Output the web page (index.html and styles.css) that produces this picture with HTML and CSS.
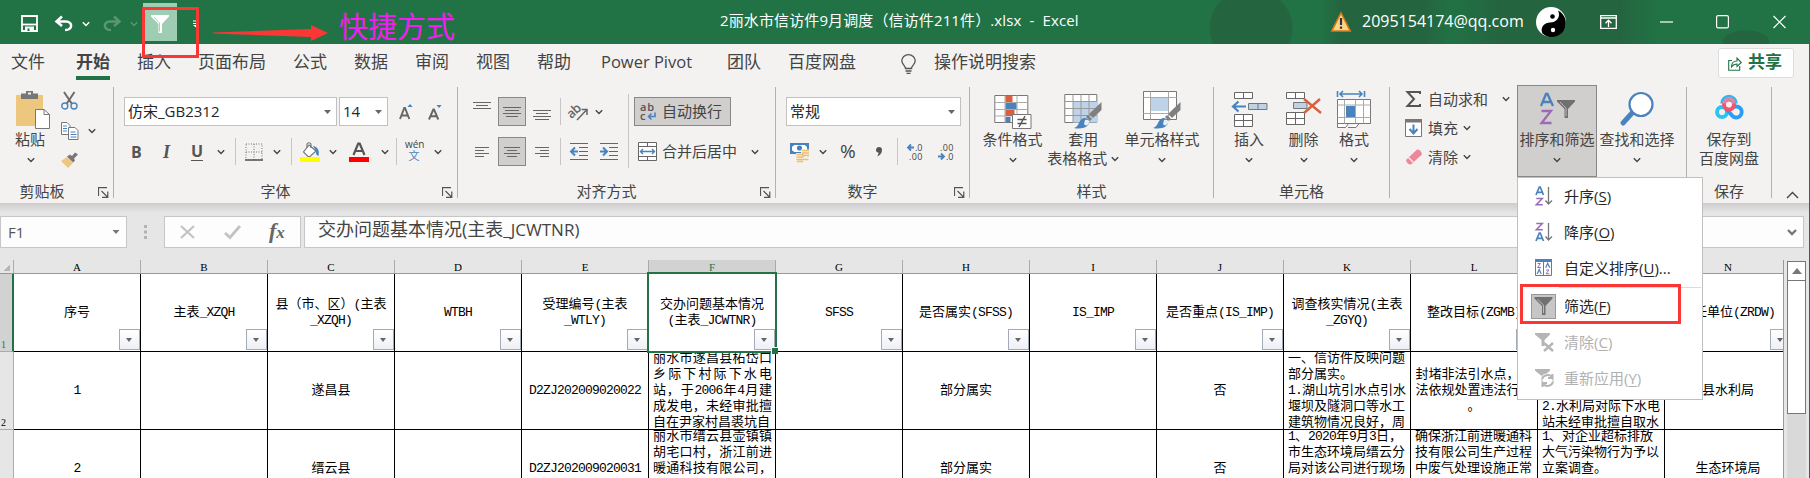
FILE: index.html
```html
<!DOCTYPE html>
<html lang="zh-CN">
<head>
<meta charset="utf-8">
<title>Excel</title>
<link rel="stylesheet" href="styles.css">
</head>
<body>
<svg class="defs" width="0" height="0">
  <symbol id="chev" viewBox="0 0 8 6"><path d="M.8 1.2 4 4.4 7.2 1.2" fill="none" stroke="currentColor" stroke-width="1.4"/></symbol>
  <symbol id="tri" viewBox="0 0 7 4"><path d="M0 0h7L3.5 4z" fill="currentColor"/></symbol>
  <symbol id="launch" viewBox="0 0 11 11"><path d="M.5 9V.7H9M3.5 4l5.5 5.500M9.800 4.500v5.800H4" fill="none" stroke="#555" stroke-width="1.200"/></symbol>
  <symbol id="funnel" viewBox="0 0 18 18"><path d="M0 0h18v1.500L11 9v9H7.500V9L0 1.500z" fill="currentColor"/><path d="M3 2l6 6.200v8" fill="none" stroke="#fff" stroke-opacity=".6" stroke-width=".9"/></symbol>
  <symbol id="brush" viewBox="0 0 28 28"><path d="M27.500 1v8L19 17l-4-4z" fill="#808080"/><path d="M14 14l4 4-2 2-4-4z" fill="#808080"/><path d="M0 27c5-1 5-9 10-10 4-.5 7 4 4 7-3 4-10 4-14 3z" fill="#4a82bd"/><path d="M11 19c3-1 5 1 4 3-1 3-4 3-5 1z" fill="#e6eff8"/></symbol>
</svg>

<div class="window">
<header class="titlebar">
  <div class="qat">
    <svg width="17" height="17" viewBox="0 0 17 17"><path d="M1 1h15v15H1z" fill="none" stroke="#fff" stroke-width="1.800"/><path d="M1 9.500h15" stroke="#fff" stroke-width="1.800"/><path d="M4 11.500h9V16H4z" fill="#fff"/><path d="M6.500 13.500h2V16h-2z" fill="#217346"/></svg>
    <svg width="18" height="15" viewBox="0 0 18 15"><path d="M7 .5 1.500 5.500 7 10M2 5.500h9c7 0 7 8.500-1 8.500" fill="none" stroke="#fff" stroke-width="2.500"/></svg>
    <svg class="w" width="8" height="6"><use href="#chev"/></svg>
    <svg class="dim" width="18" height="15" viewBox="0 0 18 15"><path d="M11 .5 16.500 5.500 11 10M16 5.500H7c-7 0-7 8.500 1 8.500" fill="none" stroke="#fff" stroke-width="2.500"/></svg>
    <svg class="w dim" width="8" height="6"><use href="#chev"/></svg>
    <span class="qat-filter"><svg width="18" height="18" viewBox="0 0 18 18"><path d="M0 0h18v1.500L11 9v9H7.500V9L0 1.500z" fill="#fff"/><path d="M3 2l5.500 6v8.500" fill="none" stroke="#9fcdb3" stroke-width=".9"/></svg></span>
    <svg width="5" height="8" viewBox="0 0 5 8"><path d="M0 1h5M0 3.500h5" stroke="#fff" stroke-width="1"/><path d="M0 5h5L3 7.500z" fill="#fff"/></svg>
  </div>
  <div class="doc-title">2丽水市信访件9月调度（信访件211件）.xlsx&nbsp; -&nbsp; Excel</div>
  <div class="account">
    <svg width="20" height="20" viewBox="0 0 20 20"><path d="M10 1 19.200 19H.8z" fill="#fbd58a" stroke="#d87a16" stroke-width="1.600"/><path d="M10 6v7M10 14.500v2.300" stroke="#333" stroke-width="2.200"/></svg>
    <span class="mail">2095154174@qq.com</span>
    <svg width="30" height="30" viewBox="0 0 30 30"><circle cx="15" cy="15" r="15" fill="#fff"/><path d="M22 3.500A14 14 0 1 1 6.500 26.500C3.500 20 9 15.500 14 15.500c7 0 11-6 8-12z" fill="#000"/><circle cx="16.500" cy="9.500" r="2.300"/><circle cx="17" cy="23" r="2.200" fill="#fff"/></svg>
  </div>
  <div class="winbtns">
    <svg width="17" height="14" viewBox="0 0 17 14"><path d="M.7.7h15.600v12.600H.7zM.7 3h15.600M8.500 12V5.500M5.500 8.200l3-3 3 3" fill="none" stroke="#fff" stroke-width="1.300"/></svg>
    <svg width="13" height="14" viewBox="0 0 13 14"><path d="M0 7h13" stroke="#fff" stroke-width="1.200"/></svg>
    <svg width="13" height="14" viewBox="0 0 13 14"><rect x=".6" y=".6" width="11.800" height="12.300" rx="1.500" fill="none" stroke="#fff" stroke-width="1.200"/></svg>
    <svg width="13" height="14" viewBox="0 0 13 14"><path d="M.5 1l12 12M12.500 1l-12 12" stroke="#fff" stroke-width="1.200"/></svg>
  </div>
</header>

<nav class="tabs">
  <span>文件</span><span class="active">开始</span><span>插入</span><span>页面布局</span><span>公式</span><span>数据</span><span>审阅</span><span>视图</span><span>帮助</span><span class="pp">Power Pivot</span><span>团队</span><span>百度网盘</span>
  <svg class="bulb" width="15" height="20" viewBox="0 0 15 20"><path d="M4.500 14.500c0-3-3.700-4-3.700-7.700a6.700 6.200 0 0 1 13.400 0c0 3.700-3.700 4.700-3.700 7.700zM4.500 17h6M5.500 19.300h4" fill="none" stroke="#555" stroke-width="1.300"/></svg>
  <span class="tell">操作说明搜索</span>
  <div class="share"><svg width="14" height="15" viewBox="0 0 14 15"><path d="M4 4.500H.7v9.800h11V10M3.500 11c0-4 2-6 5.500-6V2l4.300 4.500L9 10.500V8c-2.500 0-4 .8-5.500 3z" fill="none" stroke="#217346" stroke-width="1.100"/></svg><b>共享</b></div>
</nav>

<section class="ribbon">
  <div class="group clip">
    <div class="body">
      <div class="big paste">
        <svg width="36" height="38" viewBox="0 0 36 38"><path d="M1 4h27v31H1z" fill="#edc77e"/><path d="M6 2.500h5V0h7v2.500h5V8H6z" fill="#777"/><path d="M13 1.500h3v2h-3z" fill="#f3f2f1"/><path d="M20.500 18.500h8.500l5.500 5v14h-14z" fill="#fff" stroke="#777"/><path d="M29 18.500v5h5.500" fill="none" stroke="#777"/></svg>
        <span>粘贴</span><svg class="c" width="8" height="6"><use href="#chev"/></svg>
      </div>
      <div class="cliptools">
        <svg width="17" height="18" viewBox="0 0 17 18"><path d="M3 0l8 12M13.500 0l-8 12" stroke="#6b6b6b" stroke-width="2"/><circle cx="3.800" cy="14" r="3" fill="none" stroke="#4a82bd" stroke-width="1.400"/><circle cx="13" cy="14" r="3" fill="none" stroke="#4a82bd" stroke-width="1.400"/></svg>
        <div class="copy"><svg width="18" height="18" viewBox="0 0 18 18"><path d="M.5.5H6l3 3v9H.5z" fill="#fff" stroke="#777"/><path d="M2 4h4M2 6.500h4M2 9h4" stroke="#4a82bd"/><path d="M7.500 5.500H14l3 3v9H7.500z" fill="#fff" stroke="#777"/><path d="M9.500 10h5M9.500 12.500h6M9.500 15h6" stroke="#4a82bd"/></svg><svg class="c" width="8" height="6"><use href="#chev"/></svg></div>
        <svg width="18" height="16" viewBox="0 0 18 16"><path d="M0 9l6-4 6 6-5 5z" fill="#edc77e"/><path d="M6 4.500l3-2 2 1.500 3-3.500 3 2-4 4 1 2-2 2z" fill="#777"/></svg>
      </div>
    </div>
    <div class="foot"><span>剪贴板</span><svg width="11" height="11"><use href="#launch"/></svg></div>
  </div>

  <div class="group font">
    <div class="body rows">
      <div class="row r-font1">
        <div class="combo"><span>仿宋_GB2312</span><svg width="7" height="4"><use href="#tri"/></svg></div>
        <div class="combo"><span>14</span><svg width="7" height="4"><use href="#tri"/></svg></div>
        <svg width="14" height="16" viewBox="0 0 14 16"><path d="M1 15 5.300 4h.7l4.300 11M2.600 11.500h6" fill="none" stroke="#666" stroke-width="1.900"/><path d="M8.500 3 11 0l2.700 3z" fill="#4a82bd"/></svg>
        <svg width="14" height="16" viewBox="0 0 14 16"><path d="M1 15.500 5.300 5.500h.7l4.300 10M2.600 12.300h6" fill="none" stroke="#666" stroke-width="1.900"/><path d="M8.500 1 11 4l2.700-3z" fill="#4a82bd"/></svg>
      </div>
      <div class="row r-font2">
        <b class="fmt">B</b><i class="fmt it">I</i><b class="fmt un">U</b><svg class="c" width="8" height="6"><use href="#chev"/></svg><i class="sep"></i>
        <svg width="18" height="18" viewBox="0 0 18 18"><path d="M1 1h16v16H1zM9 1v16M1 9h16" fill="none" stroke="#777" stroke-dasharray="1 1.500"/><path d="M0 17h18" stroke="#555" stroke-width="1.500"/></svg><svg class="c" width="8" height="6"><use href="#chev"/></svg><i class="sep"></i>
        <svg width="20" height="20" viewBox="0 0 20 20"><path d="M9 3l7 6-6 5.500H8L3.500 10z" fill="#fff" stroke="#777" stroke-width="1.200"/><path d="M7 6V2q2-2.500 4 0v4" fill="none" stroke="#777" stroke-width="1.200"/><path d="M13 4c4 .5 7 4 5.500 10-2-1-3-2-2.500-5z" fill="#4a82bd"/><path d="M0 15h20v5H0z" fill="#ff0"/></svg><svg class="c" width="8" height="6"><use href="#chev"/></svg>
        <svg width="20" height="20" viewBox="0 0 20 20"><path d="M4.500 13 9.200 1.500h1.500L15.500 13M6 9h8" fill="none" stroke="#555" stroke-width="2.200"/><path d="M0 15h20v5H0z" fill="red"/></svg><svg class="c" width="8" height="6"><use href="#chev"/></svg><i class="sep"></i>
        <span class="wen"><span>wén</span><em>文</em></span><svg class="c" width="8" height="6"><use href="#chev"/></svg>
      </div>
    </div>
    <div class="foot"><span>字体</span><svg width="11" height="11"><use href="#launch"/></svg></div>
  </div>

  <div class="group align">
    <div class="body">
      <div class="rows left">
        <div class="row r-al1">
          <svg width="18" height="29" viewBox="0 0 18 29"><path d="M0 5.500h18M3 8.500h12M0 11.500h18" stroke="#666"/></svg>
          <span class="on"><svg width="18" height="14" viewBox="0 0 18 14"><path d="M0 2.500h18M2 5.500h14M0 8.500h18M3 11.500h12" stroke="#666"/></svg></span>
          <svg width="18" height="29" viewBox="0 0 18 29"><path d="M0 13.500h18M3 16.500h12M0 19.500h18M2 22.500h14" stroke="#666"/></svg><i class="sep"></i>
          <svg width="19" height="18" viewBox="0 0 19 18"><text x="-1" y="12" font-size="13" font-weight="600" fill="#666" transform="rotate(-42 6 10)" textLength="15">ab</text><path d="M8 17 17.500 7M12.500 6.500h5.500V12" fill="none" stroke="#666" stroke-width="1.500"/></svg><svg class="c" width="8" height="6"><use href="#chev"/></svg>
        </div>
        <div class="row r-al2">
          <svg width="14" height="14" viewBox="0 0 14 14"><path d="M0 2.500h14M0 5.500h9M0 8.500h14M0 11.500h9" stroke="#666"/></svg>
          <span class="on"><svg width="16" height="14" viewBox="0 0 16 14"><path d="M0 2.500h16M3 5.500h10M0 8.500h16M3 11.500h10" stroke="#666"/></svg></span>
          <svg width="14" height="14" viewBox="0 0 14 14"><path d="M0 2.500h14M5 5.500h9M0 8.500h14M5 11.500h9" stroke="#666"/></svg><i class="sep"></i>
          <svg width="18" height="17" viewBox="0 0 18 17"><path d="M0 .5h18M9 4.500h9M9 8.500h9M9 12.500h9M0 16.500h18" stroke="#666"/><path d="M8 8.500H2M5 4.500l-4 4 4 4" fill="none" stroke="#4a82bd" stroke-width="2"/></svg>
          <svg width="18" height="17" viewBox="0 0 18 17"><path d="M0 .5h18M9 4.500h9M9 8.500h9M9 12.500h9M0 16.500h18" stroke="#666"/><path d="M0 8.500h6M3 4.500l4 4-4 4" fill="none" stroke="#4a82bd" stroke-width="2"/></svg>
        </div>
      </div>
      <i class="sep tall"></i>
      <div class="rows right">
        <div class="wrapbtn"><svg width="17" height="18" viewBox="0 0 17 18"><text x="0" y="8" font-size="11" font-weight="600" fill="#555" textLength="14">ab</text><text x="0" y="17" font-size="11" font-weight="600" fill="#555">c</text><path d="M15 9.500v4H9M11.500 10.500l-3 3 3 3" fill="none" stroke="#4a82bd" stroke-width="1.600"/></svg><span>自动换行</span></div>
        <div class="merge"><svg width="19" height="19" viewBox="0 0 19 19"><path d="M.5.5h18v18H.5zM.5 4.500h18M.5 14.500h18M9.500.5v4M9.500 14.500v4" fill="#fff" stroke="#666"/><path d="M3 9.500h13M5 7 2.500 9.500 5 12M14 7l2.500 2.500L14 12" fill="none" stroke="#4a82bd" stroke-width="1.400"/></svg><span>合并后居中</span><svg class="c" width="8" height="6"><use href="#chev"/></svg></div>
      </div>
    </div>
    <div class="foot"><span>对齐方式</span><svg width="11" height="11"><use href="#launch"/></svg></div>
  </div>

  <div class="group number">
    <div class="body rows">
      <div class="row r-n1"><div class="combo"><span>常规</span><svg width="7" height="4"><use href="#tri"/></svg></div></div>
      <div class="row r-n2">
        <svg width="20" height="20" viewBox="0 0 20 20"><path d="M0 1h19v11H0z" fill="#4a82bd"/><path d="M2 4.500q1.500 0 2-1.500h11q.5 1.500 2 1.500v4q-1.500 0-2 1.500H4q-.5-1.500-2-1.500z" fill="#fff"/><circle cx="9.500" cy="6" r="2.600" fill="#4a82bd"/><path d="M11 7.500h8v11h-5v1.500H6V11h5z" fill="#f3f2f1"/><path d="M12 8.500h7M12 11h7M12 13.500h7M6.500 12.500h7M6.500 15h7M6.500 17.500h12M7 19.500h6" stroke="#edbf6c" stroke-width="1.600"/></svg><svg class="c" width="8" height="6"><use href="#chev"/></svg>
        <span class="pct">%</span>
        <svg width="7" height="10" viewBox="0 0 7 10"><path d="M3 0c2 0 3 1.300 3 3C6 6 4 8.500 1 9.500c1-1.500 1.500-2.500 1.500-4C.5 5.500 0 4 0 3 0 1 1.500 0 3 0z" fill="#555"/></svg><i class="sep"></i>
        <svg width="16" height="18" viewBox="0 0 16 18"><text x="8" y="7.500" font-size="9" fill="#444" textLength="7.500">.0</text><text x="2" y="17" font-size="9" fill="#444" textLength="13.500">.00</text><path d="M7 4.500H1.500M4 1.500l-3 3 3 3" fill="none" stroke="#4a82bd" stroke-width="1.800"/></svg>
        <svg width="16" height="18" viewBox="0 0 16 18"><text x="2" y="7.500" font-size="9" fill="#444" textLength="13.500">.00</text><text x="8" y="17" font-size="9" fill="#444" textLength="7.500">.0</text><path d="M0 13.500h5.500M3 10.500l3 3-3 3" fill="none" stroke="#4a82bd" stroke-width="1.800"/></svg>
      </div>
    </div>
    <div class="foot"><span>数字</span><svg width="11" height="11"><use href="#launch"/></svg></div>
  </div>

  <div class="group styles">
    <div class="body">
      <div class="big b-cond"><svg width="38" height="38" viewBox="0 0 38 38"><path d="M.8 4.500h33v27h-33z" fill="#fff" stroke="#777"/><path d="M.8 11.500h33M.8 18.500h33M.8 25h33M11 4.500v27M23 4.500v27" stroke="#aaa" fill="none"/><path d="M11.500 5h7v6h-7zM11.500 19h9v6h-9z" fill="#d95f3f"/><path d="M11.500 12h11v6h-11zM11.500 26h5v5h-5z" fill="#4a82bd"/><path d="M18.500 23.500h18.500v14H18.500z" fill="#fff" stroke="#777"/><path d="M23.500 28.500h9M23.500 32.500h9M31 25l-6 11" stroke="#555" stroke-width="1.400"/></svg><span>条件格式</span><svg class="c" width="8" height="6"><use href="#chev"/></svg></div>
      <div class="big b-tab"><svg width="38" height="38" viewBox="0 0 38 38"><path d="M.8 3.500h32v28h-32z" fill="#fff" stroke="#777"/><path d="M9 10.500h24v21H9z" fill="#bfd3e8"/><path d="M.8 10.500h32M.8 17.500h32M.8 24.500h32M9 3.500v28M17 3.500v28M25 3.500v28" stroke="#999" fill="none"/><use href="#brush" x="10" y="10" width="28" height="28"/></svg><span>套用</span><span>表格格式<svg class="c inl" width="8" height="6"><use href="#chev"/></svg></span></div>
      <div class="big b-cell"><svg width="38" height="38" viewBox="0 0 38 38"><path d="M.5.5h33v28H.5z" fill="#fff" stroke="#777"/><path d="M.5 6.500h33M.5 22.500h33M7.500.5v28M25.500.5v28" stroke="#aaa" fill="none"/><path d="M8 7h17v13H8z" fill="#bfd3e8"/><use href="#brush" x="10" y="10" width="28" height="28"/></svg><span>单元格样式</span><svg class="c" width="8" height="6"><use href="#chev"/></svg></div>
    </div>
    <div class="foot"><span>样式</span></div>
  </div>

  <div class="group cells">
    <div class="body">
      <div class="big b-ins"><svg width="37" height="38" viewBox="0 0 37 38"><path d="M3.500 1.500h18v6h-18zM12.500 1.500v6M3.500 23.500h18v12h-18zM3.500 29.500h18M12.500 23.500v12" fill="#fff" stroke="#666"/><path d="M17.500 12.500H36v6H17.500zM27 12.500v6" fill="#bfd3e8" stroke="#777"/><path d="M15 15.500H3M7.500 10.500l-5.500 5 5.500 5" fill="none" stroke="#4a82bd" stroke-width="2.200"/></svg><span>插入</span><svg class="c" width="8" height="6"><use href="#chev"/></svg></div>
      <div class="big b-del"><svg width="37" height="38" viewBox="0 0 37 38"><path d="M1.500 1.500h18v6h-18zM10.500 1.500v6M1.500 21.500h18v12h-18zM1.500 27.500h18M10.500 21.500v12" fill="#fff" stroke="#666"/><path d="M8.500 11.500H22v6H8.500z" fill="#bfd3e8" stroke="#777"/><path d="M19 8l17 14M35 8 19 22" fill="none" stroke="#d95f3f" stroke-width="2.400"/></svg><span>删除</span><svg class="c" width="8" height="6"><use href="#chev"/></svg></div>
      <div class="big b-fmt"><svg width="36" height="38" viewBox="0 0 36 38"><path d="M1.500 0v6M28.500 0v6M4 3h22M7 0 4 3l3 3M23 0l3 3-3 3" fill="none" stroke="#4a82bd" stroke-width="1.600"/><path d="M1.500 32v4.500h8l3-4M12 36.500h8l3-4" fill="#fff" stroke="#777"/><path d="M1.500 8.500h33v24h-33z" fill="#fff" stroke="#777"/><path d="M1.500 14h33M1.500 26.500h33M8.500 8.500v24M19.500 8.500v24M27.500 8.500v24" stroke="#aaa"/><path d="M10 15h9v11h-9z" fill="#4a82bd"/></svg><span>格式</span><svg class="c" width="8" height="6"><use href="#chev"/></svg></div>
    </div>
    <div class="foot"><span>单元格</span></div>
  </div>

  <div class="group edit">
    <div class="body">
      <div class="edits">
        <div class="er sum"><svg width="17" height="18" viewBox="0 0 17 18"><path d="M15 4V2H2.500L9 9l-6.500 7H15v-2" fill="none" stroke="#555" stroke-width="2"/></svg><span>自动求和</span><svg class="c" width="8" height="6"><use href="#chev"/></svg></div>
        <div class="er"><svg width="17" height="18" viewBox="0 0 17 18"><path d="M.5.500h16v17H.5z" fill="#fff" stroke="#777"/><path d="M0 0h17v3.500H0z" fill="#777"/><path d="M8.500 5.500v8M4.500 10l4 4.500 4-4.500" fill="none" stroke="#4a82bd" stroke-width="2"/></svg><span>填充</span><svg class="c" width="8" height="6"><use href="#chev"/></svg></div>
        <div class="er"><svg width="17" height="18" viewBox="0 0 17 18"><path d="M1 12 12 1.500q4 0 5 5L6 16.500q-4 0-5-4.500z" fill="#e9899b"/><path d="M3.500 9.500l5 5" stroke="#f3f2f1" stroke-width="1.300"/></svg><span>清除</span><svg class="c" width="8" height="6"><use href="#chev"/></svg></div>
      </div>
      <div class="big b-sort"><svg width="36" height="38" viewBox="0 0 36 38"><path d="M2 15 7 3h1.500L14 15M4 11h8" fill="none" stroke="#4a82bd" stroke-width="2.300"/><path d="M2.500 20h9.500L2.500 32h10" fill="none" stroke="#9c6bb8" stroke-width="2.300"/><g color="#707070"><use href="#funnel" x="18" y="9" width="18" height="18"/></g></svg><span>排序和筛选</span><svg class="c" width="8" height="6"><use href="#chev"/></svg></div>
      <div class="big b-find"><svg width="36" height="38" viewBox="0 0 36 38"><path d="M14 21 4 32" stroke="#4a82bd" stroke-width="5" stroke-linecap="round"/><circle cx="22" cy="13.500" r="11.500" fill="#fff" stroke="#4a82bd" stroke-width="2.200"/></svg><span>查找和选择</span><svg class="c" width="8" height="6"><use href="#chev"/></svg></div>
    </div>
    <div class="foot"></div>
  </div>

  <div class="group save">
    <div class="body">
      <div class="big b-pan"><svg width="28" height="38" viewBox="0 0 28 38"><g fill="none" stroke-width="3.800"><path d="M7.200 12.500a6.800 6.800 0 0 1 13.600 0" stroke="#28b8f5"/><circle cx="7" cy="21" r="5" stroke="#2bc4f0"/><path d="M17 17.500a5.500 5.500 0 1 1 0 7L11 17.500" stroke="#2a9df4"/><circle cx="14" cy="13.500" r="5" stroke="#f5536b"/><path d="M9.200 12.500a4.800 4.800 0 0 1 9.600 0" stroke="#d68aa8"/></g></svg><span>保存到</span><span>百度网盘</span></div>
    </div>
    <div class="foot"><span>保存</span></div>
  </div>
  <svg class="collapse" width="13" height="8" viewBox="0 0 13 8"><path d="M1 7l5.500-5.500L12 7" fill="none" stroke="#444" stroke-width="1.400"/></svg>
</section>

<section class="fbar">
  <div class="fbox name">F1<svg width="8" height="4" preserveAspectRatio="none"><use href="#tri"/></svg></div>
  <svg class="dots" width="3" height="14" viewBox="0 0 3 14"><path d="M0 0h3v3H0zM0 5.500h3v3H0zM0 11h3v3H0z" fill="#b3b3b3"/></svg>
  <div class="fbox btns">
    <svg width="16" height="14" viewBox="0 0 16 14"><path d="M1 1l13 12M14 1 1 13" stroke="#c3c3c3" stroke-width="2.200"/></svg>
    <svg width="17" height="14" viewBox="0 0 17 14"><path d="M1 8l5 4.500L16 1" fill="none" stroke="#c3c3c3" stroke-width="2.800"/></svg>
    <span class="fx">f<small>x</small></span>
  </div>
  <div class="fbox formula"><span>交办问题基本情况(主表<span class="fl">_JCWTNR)</span></span><svg width="10" height="7" viewBox="0 0 10 7"><path d="M1 1l4 4 4-4" fill="none" stroke="#777" stroke-width="2.400"/></svg></div>
</section>

<section class="sheetwrap">
  <div class="sheet">
    <div class="colhead"><i class="corner"></i><span>A</span><span>B</span><span>C</span><span>D</span><span>E</span><span class="sel">F</span><span>G</span><span>H</span><span>I</span><span>J</span><span>K</span><span>L</span><span>M</span><span>N</span></div>
    <div class="line r1">
      <div class="rh cur">1</div>
      <div class="cell"><p>序号</p><i class="fb"></i></div>
      <div class="cell"><p>主表<s>_XZQH</s></p><i class="fb"></i></div>
      <div class="cell"><p>县（市、区）<s>(</s>主表<br><s>_XZQH)</s></p><i class="fb"></i></div>
      <div class="cell"><p><s>WTBH</s></p><i class="fb"></i></div>
      <div class="cell"><p>受理编号<s>(</s>主表<br><s>_WTLY)</s></p><i class="fb"></i></div>
      <div class="cell picked"><p>交办问题基本情况<br><s>(</s>主表<s>_JCWTNR)</s></p><i class="fb"></i></div>
      <div class="cell"><p><s>SFSS</s></p><i class="fb"></i></div>
      <div class="cell"><p>是否属实<s>(SFSS)</s></p><i class="fb"></i></div>
      <div class="cell"><p><s>IS_IMP</s></p><i class="fb"></i></div>
      <div class="cell"><p>是否重点<s>(IS_IMP)</s></p><i class="fb"></i></div>
      <div class="cell"><p>调查核实情况<s>(</s>主表<br><s>_ZGYQ)</s></p><i class="fb"></i></div>
      <div class="cell"><p>整改目标<s>(ZGMB)</s></p><i class="fb"></i></div>
      <div class="cell"><i class="fb"></i></div>
      <div class="cell"><p>责任单位<s>(ZRDW)</s></p><i class="fb last"></i></div>
    </div>
    <div class="line">
      <div class="rh">2</div>
      <div class="cell"><p><s>1</s></p></div><div class="cell"></div><div class="cell"><p>遂昌县</p></div><div class="cell"></div><div class="cell"><p><s>D2ZJ202009020022</s></p></div>
      <div class="cell long just"><p>丽水市遂昌县柘岱口</p><p>乡际下村际下水电</p><p>站，于<s>2006</s>年<s>4</s>月建</p><p>成发电，未经审批擅</p><p class="nj">自在尹家村昌裘坑自</p></div>
      <div class="cell"></div><div class="cell"><p>部分属实</p></div><div class="cell"></div><div class="cell"><p>否</p></div>
      <div class="cell long"><p>一、信访件反映问题</p><p>部分属实。</p><p><s>1.</s>湖山坑引水点引水</p><p>堰坝及隧洞口等水工</p><p>建筑物情况良好，周</p></div>
      <div class="cell"><p>封堵非法引水点，依<br>法依规处置违法行为<br>。</p></div>
      <div class="cell long low"><p><s>2.</s>水利局对际下水电</p><p>站未经审批擅自取水</p></div>
      <div class="cell"><p>县水利局</p></div>
    </div>
    <div class="line">
      <div class="rh"></div>
      <div class="cell"><p><s>2</s></p></div><div class="cell"></div><div class="cell"><p>缙云县</p></div><div class="cell"></div><div class="cell"><p><s>D2ZJ202009020031</s></p></div>
      <div class="cell long just"><p>丽水市缙云县壶镇镇</p><p>胡宅口村，浙江前进</p><p>暖通科技有限公司，</p></div>
      <div class="cell"></div><div class="cell"><p>部分属实</p></div><div class="cell"></div><div class="cell"><p>否</p></div>
      <div class="cell long"><p><s>1</s>、<s>2020</s>年<s>9</s>月<s>3</s>日，</p><p>市生态环境局缙云分</p><p>局对该公司进行现场</p></div>
      <div class="cell long"><p>确保浙江前进暖通科</p><p>技有限公司生产过程</p><p>中废气处理设施正常</p></div>
      <div class="cell long"><p><s>1</s>、对企业超标排放</p><p>大气污染物行为予以</p><p>立案调查。</p></div>
      <div class="cell"><p>生态环境局</p></div>
    </div>
  </div>
  <div class="scroll"><div class="up"><svg width="10" height="6" viewBox="0 0 10 6"><path d="M0 6 5 0l5 6z" fill="#777"/></svg></div><div class="thumb"></div></div>
</section>

<div class="menu">
  <div class="mi"><svg width="18" height="20" viewBox="0 0 18 20"><path d="M1 9 4.300 1h.9L8.500 9M2.300 6.300h5" fill="none" stroke="#4a82bd" stroke-width="1.700"/><path d="M1.300 12.500h6l-6 6.200h6.500" fill="none" stroke="#9c6bb8" stroke-width="1.500"/><path d="M13.500 1v16.500M10.500 14.500l3 3.500 3.500-3.500" fill="none" stroke="#777" stroke-width="1.300"/></svg><span>升序(<u>S</u>)</span></div>
  <div class="mi"><svg width="18" height="20" viewBox="0 0 18 20"><path d="M1 19l3.300-8h.9l3.300 8M2.300 16.300h5" fill="none" stroke="#4a82bd" stroke-width="1.700"/><path d="M1.300 1.500h6l-6 6.200h6.500" fill="none" stroke="#9c6bb8" stroke-width="1.500"/><path d="M13.500 1v16.500M10.500 14.500l3 3.500 3.500-3.500" fill="none" stroke="#777" stroke-width="1.300"/></svg><span>降序(<u>O</u>)</span></div>
  <div class="mi"><svg width="18" height="20" viewBox="0 0 18 20"><path d="M.5 1.500h16v16H.5zM8.500 4v14" fill="#fff" stroke="#777"/><path d="M0 1h17v3H0z" fill="#4a82bd"/><path d="M2.500 5.500h3l-3 4h3.500M11 12h3l-3 3.800h3.500" fill="none" stroke="#9c6bb8"/><path d="M2.200 16l2-4.500 2 4.500M10.700 9.800l2-4.500 2 4.500" fill="none" stroke="#4a82bd" stroke-width="1.200"/></svg><span>自定义排序(<u>U</u>)...</span></div>
  <hr>
  <div class="mi chk"><i><svg width="19" height="18" preserveAspectRatio="none"><use href="#funnel"/></svg></i><span>筛选(<u>F</u>)</span></div>
  <div class="mi off"><svg width="19" height="20" viewBox="0 0 19 20"><path d="M0 1h15v1.500L9.500 8v6h-3V8L0 2.500z" fill="#b5b5b5"/><path d="M9 11l9 8M18 11l-9 8" stroke="#b5b5b5" stroke-width="2.400"/></svg><span>清除(<u>C</u>)</span></div>
  <div class="mi off"><svg width="19" height="20" viewBox="0 0 19 20"><path d="M0 1h15v1.500L9.500 8v5h-3V8L0 2.500z" fill="#b5b5b5"/><circle cx="12" cy="12.500" r="7" fill="#fff"/><path d="M7 11.500c1-5 8-6 10.500-1.500V6M18 10h-5M18 13.500c-1 5-8 6-10.500 1.500v4M7 15h5" fill="none" stroke="#b5b5b5" stroke-width="2"/></svg><span>重新应用(<u>Y</u>)</span></div>
</div>

<div class="mark m1"></div>
<div class="mark m2"></div>
<svg class="arrow" width="116" height="18" viewBox="0 0 116 18"><path d="M0 7.500 98 4V0l17 8-17 8v-4L0 8.500z" fill="#fa3735"/></svg>
<div class="note">快捷方式</div>
</div>
</body>
</html>
```
FILE: styles.css
```css
* { box-sizing: border-box; }
body { margin: 0; font-family: "Open Sans", "Noto Sans CJK SC", sans-serif; font-size: 15px; color: #444; }
svg { display: block; flex: none; overflow: visible; }
.defs { position: absolute; }
.window { position: relative; width: 1810px; height: 478px; overflow: hidden; background: #e6e6e6; border-right: 1px solid #217346; }
.w { color: #fff; }
.dim { opacity: .25; }
.c { color: #444; }

/* title bar */
.titlebar { height: 44px; display: flex; color: #fff; white-space: nowrap;
  background:
    radial-gradient(ellipse 42px 40px at 1251px 28px, #24653f 97%, transparent),
    radial-gradient(ellipse 24px 12px at 1746px 42px, #24653f 95%, transparent),
    linear-gradient(90deg, transparent 1320px, #24653f 1340px, #24653f 1425px, #22704480 1450px, #24653f 1500px, #24653f 1620px, transparent 1660px),
    #217346; }
.qat { width: 720px; display: grid; grid-template-columns: 34px 27px 21px 27px 13px 50px 10px; padding-left: 21px; height: 41px; align-items: center; padding-top: 6px; }
.qat-filter { width: 34px; height: 38px; margin-top: -3px; background: #9fcdb3; display: flex; align-items: center; justify-content: center; padding-top: 4px; }
.doc-title { width: 611px; line-height: 41px; letter-spacing: .12px; }
.account { width: 269px; display: grid; grid-template-columns: 31px 174px 30px; height: 44px; align-items: center; }
.mail { font-size: 16px; line-height: 20px; margin-top: -2px; }
.winbtns { display: grid; grid-template-columns: 60px 56px 57px 13px; align-items: center; height: 43px; }

/* tabs */
.tabs { height: 43px; background: #f3f2f1; display: flex; gap: 27px; padding-left: 11px; font-size: 17px; line-height: 35px; white-space: nowrap; }
.tabs .active { margin-left: 4px; font-weight: 700; height: 36px; border-bottom: 4px solid #217346; }
.pp { width: 102px; padding-left: 3px; font-size: 16.500px; }
.bulb { margin: 10px 0 0 18px; }
.tell { margin-left: -9px; }
.share { margin: 4px 15px 0 auto; width: 76px; height: 30px; border: 1px solid #ddd; border-radius: 3px; background: #fff; display: flex; align-items: center; gap: 6px; padding-left: 9px; color: #217346; line-height: 24px; }
.share b { margin-top: -3px; }

/* ribbon */
.ribbon { height: 116px; background: #f3f2f1; display: flex; white-space: nowrap; }
.group { height: 111px; border-right: 1px solid #b4b2b0; display: flex; flex-direction: column; }
.body { height: 95px; display: flex; }
.foot { height: 16px; display: flex; line-height: 18px; }
.foot span { flex: 1; text-align: center; }
.foot svg { margin: 5px 4px 0 5px; }
.clip { width: 114px; }
.clip .foot span { padding-right: 9px; }
.font { width: 344px; }
.align { width: 318px; }
.number { width: 194px; }
.styles { width: 244px; }
.cells { width: 176px; }
.edit { width: 297px; }
.save { width: 85px; }
.collapse { margin: 104px 0 0 14px; }

.big { display: flex; flex-direction: column; align-items: center; padding-top: 4px; line-height: 19px; }
.big > span:nth-of-type(1) { margin-top: 1px; }
.big > .c { margin-top: 8px; }
.inl { display: inline-block; margin-left: 4px; vertical-align: 2px; }
.paste { width: 61px; padding-left: 2px; align-items: flex-start; }
.paste > svg:first-child { margin-left: 13px; }
.paste > span { margin-left: 13px; }
.paste > .c { margin-left: 25px; }
.b-cond { width: 87px; } .b-tab { width: 56px; } .b-cell { width: 104px; }
.b-ins { width: 70px; } .b-del { width: 39px; } .b-fmt { width: 62px; }
.b-sort { width: 80px; height: 92px; margin: -2px 0 0; padding-top: 5px; background: #d0cfce; border: 1px solid #8a8886; }
.b-find { width: 80px; }
.b-pan { width: 84px; }

.cliptools { display: flex; flex-direction: column; gap: 12px; padding-top: 5px; }
.copy { display: flex; align-items: center; gap: 9px; }

.rows { flex-direction: column; gap: 11px; padding-top: 10px; }
.row { display: grid; height: 29px; align-items: center; }
.sep { width: 1px; height: 27px; background: #c8c6c4; }
.combo { height: 29px; border: 1px solid #c3c1bf; background: #fff; display: flex; align-items: center; justify-content: space-between; padding: 0 5px 0 3px; color: #262626; line-height: 20px; }
.combo span { margin-top: -2px; }
.combo svg { color: #666; }
.r-font1 { grid-template-columns: 213px 49px 14px 14px; padding-left: 10px; column-gap: 2px; }
.r-font1 svg:nth-child(3) { margin-left: 9px; }
.r-font1 svg:nth-child(4) { margin-left: 22px; }
.r-font2 { grid-template-columns: 32px 28px 25px 18px 10px 28px 18px 9px 29px 20px 32px 15px 9px 29px 8px; padding-left: 18px; }
.fmt { font-size: 16px; color: #555; line-height: 22px; margin-left: -1px; }
.it { font-family: "Liberation Serif", serif; font-weight: 700; font-size: 18px; }
.un { border-bottom: 1px solid #555; width: 12px; line-height: 17px; font-size: 16px; }
.wen { font-size: 10px; line-height: 10px; width: 18px; text-align: center; }
.wen span { display: block; margin-top: -2px; }
.wen em { display: block; font-style: normal; font-size: 11px; line-height: 13px; color: #4a82bd; }

.left { display: flex; width: 170px; }
.right { display: flex; padding-left: 5px; }
.right span { margin-top: -2px; }
.tall { height: 74px; margin-top: 7px; }
.r-al1 { grid-template-columns: 25px 35px 27px 9px 26px 8px; padding-left: 15px; }
.r-al2 { grid-template-columns: 23px 37px 25px 10px 30px 18px; padding-left: 17px; }
.on { width: 28px; height: 29px; border: 1px solid #8a8886; background: #d0cfce; display: flex; align-items: center; justify-content: center; }
.wrapbtn { width: 97px; height: 29px; border: 1px solid #8a8886; background: #d0cfce; display: flex; align-items: center; gap: 5px; padding-left: 5px; }
.merge { display: flex; align-items: center; height: 29px; padding-left: 4px; gap: 5px; }
.merge .c { margin-left: 9px; }

.r-n1 { padding: 0 8px 0 10px; }
.r-n2 { grid-template-columns: 29px 21px 36px 21px 10px 31px 16px; padding-left: 14px; }
.pct { font-size: 19px; line-height: 22px; margin-top: -2px; }

.edits { width: 127px; display: flex; flex-direction: column; gap: 1px; padding-left: 15px; margin-top: -2px; }
.er { display: flex; align-items: center; height: 28px; gap: 6px; line-height: 20px; }
.er .c { margin-left: -1px; }
.sum .c { margin-left: 8px; }

/* formula bar */
.fbar { height: 57px; display: flex; padding-top: 13px; background: linear-gradient(#cfcdcc, #e6e6e6 10px); }
.fbox { height: 32px; background: #fdfdfd; border: 1px solid #c6c6c6; display: flex; align-items: center; }
.name { width: 127px; padding: 0 6px 0 7px; justify-content: space-between; color: #555; }
.name svg { color: #777; }
.dots { margin: 9px 17px 0; }
.btns { width: 137px; padding-left: 15px; }
.btns svg { margin-right: 28px; }
.fx { font-family: "Liberation Serif", serif; font-style: italic; font-weight: 700; font-size: 22px; line-height: 24px; color: #666; }
.fx small { font-size: 17px; }
.formula { width: 1500px; margin-left: 3px; padding: 0 6px 0 13px; justify-content: space-between; font-size: 18px; line-height: 28px; }
.formula > span { margin-top: -5px; }
.fl { font-size: 17px; }

/* sheet */
.sheetwrap { display: flex; height: 218px; }
.sheet { width: 1784px; overflow: hidden; font-family: "Liberation Mono", "Noto Sans CJK SC", monospace; font-size: 13px; color: #000; border-right: 1px solid #999; }
.colhead { display: flex; height: 14px; width: 1800px; border-bottom: 1px solid #999; font: 11px/15px "Liberation Serif", serif; }
.corner { width: 14px; flex: none; border-right: 1px solid #ababab; background: linear-gradient(135deg, transparent 50%, #b5b5b5 50%) 4px 5px / 6px 6px no-repeat; }
.colhead span { width: 127px; flex: none; text-align: center; border-right: 1px solid #ababab; }
.colhead .sel { background: #d2d2d2; color: #217346; }
.line { display: flex; height: 78px; width: 1800px; }
.rh { width: 14px; flex: none; border-right: 1px solid #ababab; border-bottom: 1px solid #ababab; font: 10px/12px "Liberation Serif", serif; display: flex; align-items: flex-end; padding-left: 1px; }
.cur { background: #d2d2d2; color: #217346; border-right: 2px solid #217346; }
.cell { position: relative; width: 127px; flex: none; background: #fff; border-right: 1px solid #000; border-bottom: 1px solid #000; display: flex; flex-direction: column; align-items: center; justify-content: center; text-align: center; line-height: 16px; overflow: hidden; white-space: nowrap; }
.cell p { margin: 0; }
.cell s { text-decoration: none; letter-spacing: -.8px; }
.long { align-items: stretch; justify-content: flex-start; text-align: left; padding: 0 3px 0 4px; }
.long p { height: 16px; flex: none; position: relative; top: -1px; }
.just p { text-align-last: justify; }
.just .nj { text-align-last: left; }
.low { justify-content: flex-end; }
.low p { top: 2px; }
.fb { position: absolute; right: 0; bottom: 1px; width: 21px; height: 21px; border: 1px solid #a3abb8; background: linear-gradient(#fff, #eef0f6); }
.fb.last { right: auto; left: 105px; }
.fb::after { content: ""; position: absolute; left: 6px; top: 8px; border: 3.500px solid transparent; border-top: 4px solid #666; border-bottom: 0; }
.picked { overflow: visible; z-index: 2; }
.picked::before { content: ""; position: absolute; left: -2px; top: -2px; right: -2px; bottom: -2px; border: 2px solid #217346; z-index: 2; }
.picked::after { content: ""; position: absolute; right: -3px; bottom: -3px; width: 6px; height: 6px; background: #217346; border: solid #fff; border-width: 1px 0 0 1px; z-index: 3; }

.scroll { width: 19px; margin: 1px 0 0 3px; height: 217px; background: #d9d9d9; }
.up { height: 20px; background: #fff; border: 1px solid #777; display: flex; align-items: center; justify-content: center; }
.thumb { height: 134px; margin-top: -1px; background: #fff; border: 1px solid #777; }

/* drop-down menu */
.menu { position: absolute; left: 1517px; top: 177px; width: 186px; height: 223px; background: #fff; border: 1px solid #c0c0c0; color: #262626; white-space: nowrap; }
.mi { height: 36px; display: grid; grid-template-columns: 29px 1fr; align-items: center; padding-left: 17px; line-height: 20px; }
.mi u { text-underline-offset: 2px; }
.menu hr { margin: 1px 1px 0 41px; border: 0; height: 1px; background: #dcdcdc; }
.chk { padding-left: 13px; grid-template-columns: 33px 1fr; }
.chk i { width: 25px; height: 25px; background: #c6c6c6; border: 1px solid #999; display: flex; align-items: center; justify-content: center; color: #707070; }
.off { color: #b1b1b1; }

/* annotations */
.mark { position: absolute; border: 3px solid #fa3735; }
.m1 { left: 142px; top: 7px; width: 57px; height: 51px; }
.m2 { left: 1520px; top: 284px; width: 161px; height: 40px; }
.arrow { position: absolute; left: 213px; top: 25px; }
.note { position: absolute; left: 339px; top: 5px; font-size: 29px; line-height: 44px; color: #f01ef0; white-space: nowrap; }
```
